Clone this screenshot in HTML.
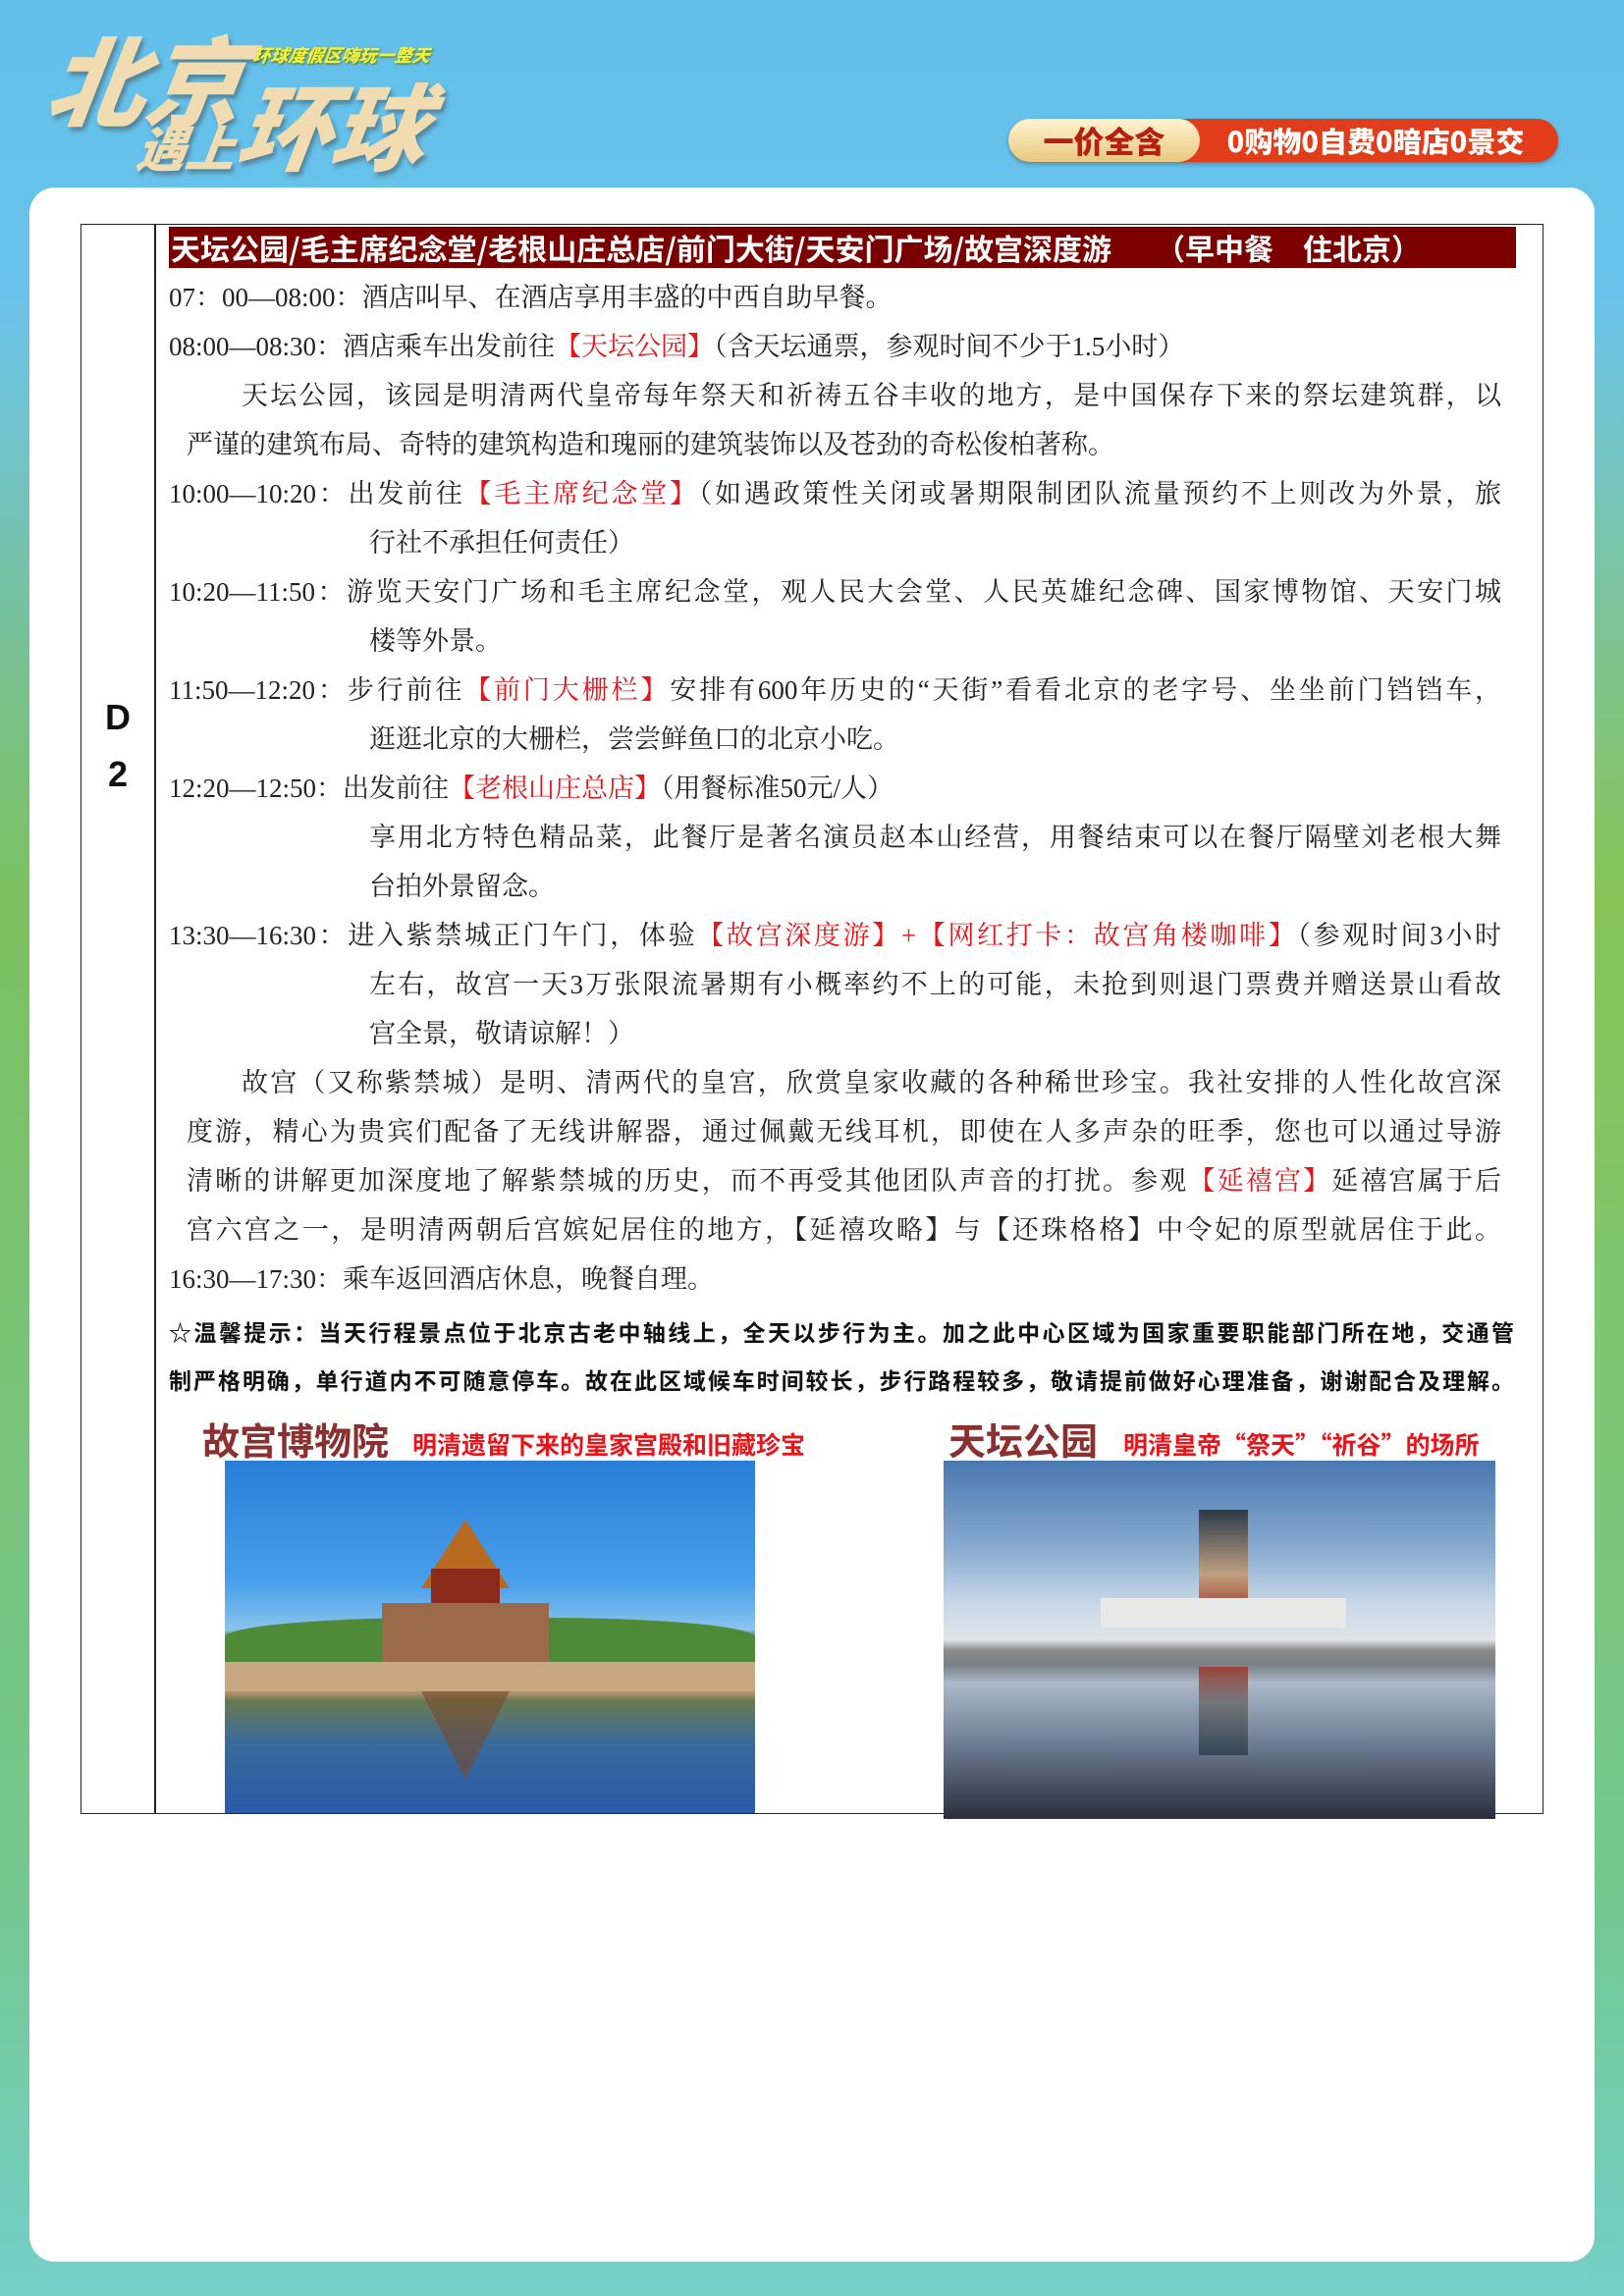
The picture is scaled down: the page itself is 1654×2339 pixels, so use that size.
<!DOCTYPE html>
<html><head><meta charset="utf-8">
<style>
*{margin:0;padding:0;box-sizing:border-box}
body{width:1654px;height:2339px;position:relative;overflow:hidden;
background:linear-gradient(180deg,#62c0ea 0%,#6ec4ea 20%,#7cc8c8 55%,#7ccfb0 75%,#76cfc8 100%);}
.sideL{position:absolute;left:0;top:300px;width:40px;height:2039px;background:linear-gradient(180deg,rgba(120,190,80,0) 0%,#7cc060 30%,#74c890 80%,#74cfc8 100%)}
.sideR{position:absolute;right:0;top:300px;width:40px;height:2039px;background:linear-gradient(180deg,rgba(120,190,80,0) 0%,#88c458 30%,#74c890 80%,#74cfc8 100%)}
.card{position:absolute;left:30px;top:191px;width:1594px;height:2113px;background:#fff;border-radius:26px}
.logo{position:absolute;font-family:"Noto Sans CJK SC",sans-serif;font-weight:900;font-style:italic;color:#f0dcb0;text-shadow:3px 4px 4px rgba(60,60,60,.45);transform:skewX(-8deg)}
.tbl{position:absolute;left:82px;top:228px;width:1490px;height:1620px;border:1.5px solid #222}
.div{position:absolute;left:157px;top:228px;width:1.5px;height:1620px;background:#222}
.hdr{position:absolute;left:172px;top:231px;width:1372px;height:42px;background:#7b0000;color:#fff;font-family:"Noto Sans CJK SC",sans-serif;font-size:30px;line-height:42px;white-space:nowrap;padding-left:2px;font-weight:700}
.ln{position:absolute;font-family:"Liberation Serif","Noto Serif CJK SC",serif;font-size:27px;color:#222;white-space:nowrap;line-height:50px;height:50px}
.j{text-align:justify;text-align-last:justify;white-space:normal;overflow:hidden}
.r{color:#e8141a}
.w{position:absolute;left:172px;width:1370px;font-family:"Noto Sans CJK SC",sans-serif;font-weight:700;font-size:23px;color:#111;line-height:48px;height:48px;text-align:justify;text-align-last:justify}
.d2{position:absolute;left:104px;width:32px;text-align:center;font-family:"Liberation Sans",sans-serif;font-weight:700;font-size:36px;color:#111}
</style></head><body>
<div class="sideL"></div><div class="sideR"></div>
<div class="logo" style="left:50px;top:20px;font-size:100px;line-height:115px;">北京</div>
<div class="logo" style="left:140px;top:120px;font-size:50px;line-height:58px;">遇上</div>
<div class="logo" style="left:244px;top:70px;font-size:96px;line-height:110px;">环球</div>
<div class="logo" style="left:258px;top:44px;font-size:18px;line-height:24px;color:#f2f23a;text-shadow:1px 1px 2px #4a6a20;">环球度假区嗨玩一整天</div>
<div style="position:absolute;left:1027px;top:121px;width:560px;height:44px;border-radius:22px;background:#e23d1a;box-shadow:0 2px 4px rgba(0,0,0,.3)"></div>
<div style="position:absolute;left:1027px;top:121px;width:195px;height:44px;border-radius:22px;background:linear-gradient(180deg,#fff4d0,#e8c880);font-family:'Noto Sans CJK SC',sans-serif;font-weight:900;font-size:31px;line-height:44px;color:#b62010;text-align:center">一价全含</div>
<div style="position:absolute;left:1220px;top:121px;width:362px;height:44px;font-family:'Noto Sans CJK SC',sans-serif;font-weight:900;font-size:29px;line-height:44px;color:#fff;text-align:center;white-space:nowrap">0购物0自费0暗店0景交</div>
<div class="card"></div>
<div class="tbl"></div><div class="div"></div>
<div class="hdr">天坛公园/毛主席纪念堂/老根山庄总店/前门大街/天安门广场/故宫深度游　　（早中餐　住北京）</div>
<div class="d2" style="top:710px">D</div>
<div class="d2" style="top:768px">2</div>

<div class="ln" style="left:172px;top:278px">07：00—08:00：酒店叫早、在酒店享用丰盛的中西自助早餐。</div>
<div class="ln" style="left:172px;top:328px">08:00—08:30：酒店乘车出发前往<span class="r">【天坛公园】</span>（含天坛通票，参观时间不少于1.5小时）</div>
<div class="ln j" style="left:246px;top:378px;width:1283px">天坛公园，该园是明清两代皇帝每年祭天和祈祷五谷丰收的地方，是中国保存下来的祭坛建筑群，以</div>
<div class="ln" style="left:190px;top:428px">严谨的建筑布局、奇特的建筑构造和瑰丽的建筑装饰以及苍劲的奇松俊柏著称。</div>
<div class="ln j" style="left:172px;top:478px;width:1357px">10:00—10:20：出发前往<span class="r">【毛主席纪念堂】</span>（如遇政策性关闭或暑期限制团队流量预约不上则改为外景，旅</div>
<div class="ln" style="left:376px;top:528px">行社不承担任何责任）</div>
<div class="ln j" style="left:172px;top:578px;width:1357px">10:20—11:50：游览天安门广场和毛主席纪念堂，观人民大会堂、人民英雄纪念碑、国家博物馆、天安门城</div>
<div class="ln" style="left:376px;top:628px">楼等外景。</div>
<div class="ln j" style="left:172px;top:678px;width:1357px">11:50—12:20：步行前往<span class="r">【前门大栅栏】</span>安排有600年历史的“天街”看看北京的老字号、坐坐前门铛铛车，</div>
<div class="ln" style="left:376px;top:728px">逛逛北京的大栅栏，尝尝鲜鱼口的北京小吃。</div>
<div class="ln" style="left:172px;top:778px">12:20—12:50：出发前往<span class="r">【老根山庄总店】</span>（用餐标准50元/人）</div>
<div class="ln j" style="left:376px;top:828px;width:1153px">享用北方特色精品菜，此餐厅是著名演员赵本山经营，用餐结束可以在餐厅隔壁刘老根大舞</div>
<div class="ln" style="left:376px;top:878px">台拍外景留念。</div>
<div class="ln j" style="left:172px;top:928px;width:1357px">13:30—16:30：进入紫禁城正门午门，体验<span class="r">【故宫深度游】+【网红打卡：故宫角楼咖啡】</span>（参观时间3小时</div>
<div class="ln j" style="left:376px;top:978px;width:1153px">左右，故宫一天3万张限流暑期有小概率约不上的可能，未抢到则退门票费并赠送景山看故</div>
<div class="ln" style="left:376px;top:1028px">宫全景，敬请谅解！）</div>
<div class="ln j" style="left:246px;top:1078px;width:1283px">故宫（又称紫禁城）是明、清两代的皇宫，欣赏皇家收藏的各种稀世珍宝。我社安排的人性化故宫深</div>
<div class="ln j" style="left:190px;top:1128px;width:1339px">度游，精心为贵宾们配备了无线讲解器，通过佩戴无线耳机，即使在人多声杂的旺季，您也可以通过导游</div>
<div class="ln j" style="left:190px;top:1178px;width:1339px">清晰的讲解更加深度地了解紫禁城的历史，而不再受其他团队声音的打扰。参观<span class="r">【延禧宫】</span>延禧宫属于后</div>
<div class="ln j" style="left:190px;top:1228px;width:1339px">宫六宫之一，是明清两朝后宫嫔妃居住的地方，【延禧攻略】与【还珠格格】中令妃的原型就居住于此。</div>
<div class="ln" style="left:172px;top:1278px">16:30—17:30：乘车返回酒店休息，晚餐自理。</div>
<div class="w" style="top:1332px">☆温馨提示：当天行程景点位于北京古老中轴线上，全天以步行为主。加之此中心区域为国家重要职能部门所在地，交通管</div>
<div class="w" style="top:1381px">制严格明确，单行道内不可随意停车。故在此区域候车时间较长，步行路程较多，敬请提前做好心理准备，谢谢配合及理解。</div>

<div style="position:absolute;left:206px;top:1442px;font-family:'Noto Sans CJK SC',sans-serif;font-weight:700;font-size:38px;line-height:48px;color:#8b3030;white-space:nowrap">故宫博物院</div>
<div style="position:absolute;left:420px;top:1454px;font-family:'Noto Sans CJK SC',sans-serif;font-weight:700;font-size:25px;line-height:34px;color:#e8141a;white-space:nowrap">明清遗留下来的皇家宫殿和旧藏珍宝</div>
<div style="position:absolute;left:966px;top:1442px;font-family:'Noto Sans CJK SC',sans-serif;font-weight:700;font-size:38px;line-height:48px;color:#8b3030;white-space:nowrap">天坛公园</div>
<div style="position:absolute;left:1144px;top:1454px;font-family:'Noto Sans CJK SC',sans-serif;font-weight:700;font-size:25px;line-height:34px;color:#e8141a;white-space:nowrap">明清皇帝“祭天”“祈谷”的场所</div>

<div style="position:absolute;left:229px;top:1488px;width:540px;height:359px;overflow:hidden;background:linear-gradient(180deg,#2a7ed8 0%,#4aa0ea 35%,#8ac4ee 48%,#4a8a3a 50%,#5a9040 58%,#c8a880 60%,#b09070 66%,#6a7a50 68%,#3a6a9a 80%,#2a5aa8 100%)">
<div style="position:absolute;left:0;top:160px;width:540px;height:50px;background:#4f8a38;border-radius:40% 40% 0 0"></div>
<div style="position:absolute;left:200px;top:60px;width:90px;height:70px;background:#b86a20;clip-path:polygon(50% 0,100% 100%,0 100%)"></div>
<div style="position:absolute;left:210px;top:110px;width:70px;height:40px;background:#8a2a1a"></div>
<div style="position:absolute;left:160px;top:145px;width:170px;height:60px;background:#9a6a4a"></div>
<div style="position:absolute;left:0;top:205px;width:540px;height:30px;background:#c8a880"></div>
<div style="position:absolute;left:200px;top:235px;width:90px;height:90px;background:#7a4a2a;opacity:.6;clip-path:polygon(0 0,100% 0,50% 100%)"></div>
</div>
<div style="position:absolute;left:961px;top:1488px;width:562px;height:365px;overflow:hidden;background:linear-gradient(180deg,#4a78b0 0%,#8aacd0 25%,#c8d8e8 40%,#e0e4e8 50%,#8a8a8a 53%,#7a8088 57%,#aab8c8 62%,#6a7a90 80%,#2a2e3a 100%)">
<div style="position:absolute;left:260px;top:50px;width:50px;height:110px;background:linear-gradient(180deg,#2a3a4a,#c0a080 60%,#a03020)"></div>
<div style="position:absolute;left:160px;top:140px;width:250px;height:30px;background:#e8e8e8"></div>
<div style="position:absolute;left:260px;top:210px;width:50px;height:90px;background:linear-gradient(180deg,#a03020,#6a6a6a 40%,#2a3a4a);opacity:.8"></div>
</div>
</body></html>
